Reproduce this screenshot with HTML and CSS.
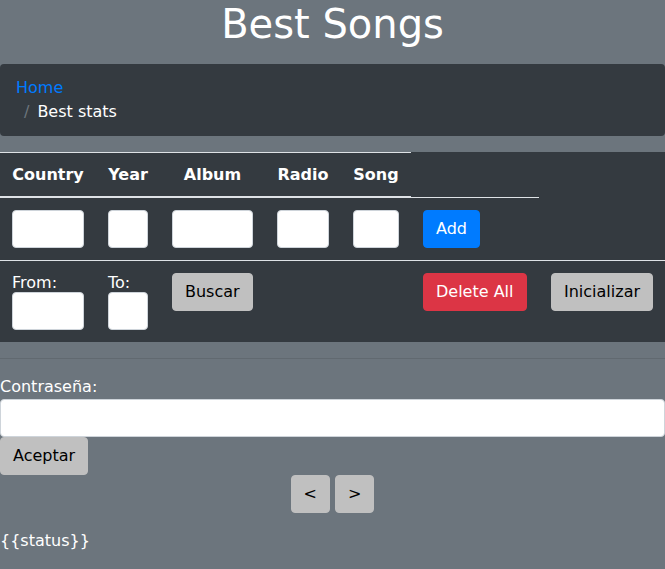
FILE: index.html
```html
<!DOCTYPE html>
<html lang="es">
<head>
<meta charset="utf-8">
<title>Best Songs</title>
<link rel="stylesheet" href="styles.css">
</head>
<body>
<h1 class="title">Best Songs</h1>
<nav class="crumbs">
  <div class="crumb"><a href="#" class="crumb-link">Home</a></div>
  <div class="crumb crumb-sub"><span class="sep">/</span>Best stats</div>
</nav>
<table class="songs">
  <colgroup>
    <col class="c1"><col class="c2"><col class="c3"><col class="c4"><col class="c5"><col class="c6"><col class="c7">
  </colgroup>
  <thead>
    <tr>
      <th>Country</th>
      <th>Year</th>
      <th>Album</th>
      <th>Radio</th>
      <th>Song</th>
    </tr>
  </thead>
  <tbody>
    <tr>
      <td><input class="field" type="text"></td>
      <td><input class="field" type="text"></td>
      <td><input class="field" type="text"></td>
      <td><input class="field" type="text"></td>
      <td><input class="field" type="text"></td>
      <td><button class="btn btn-blue">Add</button></td>
    </tr>
    <tr>
      <td><span class="lbl">From:</span><input class="field" type="text"></td>
      <td><span class="lbl">To:</span><input class="field" type="text"></td>
      <td><button class="btn btn-gray">Buscar</button></td>
      <td></td>
      <td></td>
      <td><button class="btn btn-red">Delete All</button></td>
      <td><button class="btn btn-gray">Inicializar</button></td>
    </tr>
  </tbody>
</table>
<hr class="rule">
<div class="login">
  <label class="pw-label">Contraseña:</label>
  <input class="field" type="password">
  <div class="row-left"><button class="btn btn-gray">Aceptar</button></div>
</div>
<div class="pager">
  <button class="btn btn-gray">&lt;</button>
  <button class="btn btn-gray">&gt;</button>
</div>
<p class="status">{{status}}</p>
</body>
</html>
```

FILE: styles.css
```css
html, body {
  margin: 0;
  padding: 0;
}
body {
  background: #6c757d;
  color: #fff;
  font-family: "DejaVu Sans", sans-serif;
  font-size: 16px;
  line-height: 1.5;
}
.title {
  margin: 0 0 16px;
  font-size: 40px;
  font-weight: normal;
  line-height: 1.2;
  text-align: center;
}
.crumbs {
  background: #343a40;
  border-radius: 4px;
  padding: 12px 16px;
  margin: 0 0 16px;
}
.crumb-link {
  color: #007bff;
  text-decoration: none;
}
.crumb-sub {
  padding-left: 8px;
}
.sep {
  color: #6c757d;
  padding-right: 8px;
}
.songs {
  width: 100%;
  table-layout: fixed;
  border-collapse: collapse;
  background: #343a40;
  color: #fff;
  line-height: normal;
  margin: 0 0 16px;
}
.c1 { width: 96px; }
.c2 { width: 64px; }
.c3 { width: 105px; }
.c4 { width: 76px; }
.c5 { width: 70px; }
.c6 { width: 128px; }
.c7 { width: 126px; }
.songs th,
.songs td {
  padding: 12px;
  vertical-align: top;
  border-top: 1px solid #dee2e6;
}
.songs thead th {
  border-bottom: 2px solid #dee2e6;
  font-weight: bold;
  text-align: center;
}
.lbl {
  display: block;
}
.field {
  display: block;
  width: 100%;
  height: 38px;
  box-sizing: border-box;
  margin: 0;
  padding: 6px 12px;
  border: 1px solid #ced4da;
  border-radius: 4px;
  background: #fff;
  font: inherit;
}
.btn {
  display: inline-block;
  margin: 0;
  padding: 6px 12px;
  border: 1px solid transparent;
  border-radius: 4px;
  font-family: "DejaVu Sans", sans-serif;
  font-size: 16px;
  line-height: 24px;
  vertical-align: top;
}
.btn-gray {
  background: #c0c0c0;
  border-color: #c0c0c0;
  color: #000;
}
.btn-blue {
  background: #007bff;
  border-color: #007bff;
  color: #fff;
}
.btn-red {
  background: #dc3545;
  border-color: #dc3545;
  color: #fff;
}
.rule {
  margin: 16px 0;
  border: 0;
  border-top: 1px solid rgba(0, 0, 0, 0.1);
  height: 0;
}
.pw-label {
  display: block;
}
.row-left {
  display: flex;
}
.pager {
  display: flex;
  justify-content: center;
  gap: 5px;
}
.status {
  margin: 16px 0 0;
}
```
